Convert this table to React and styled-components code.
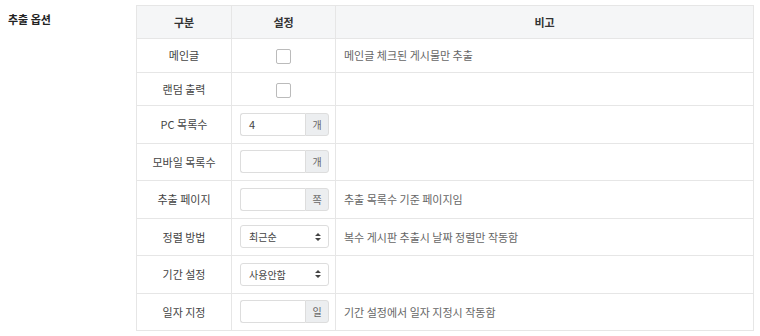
import React from 'react';
import styled, { createGlobalStyle } from 'styled-components';

const GlobalStyle = createGlobalStyle`
  body {
    margin: 0;
    background: #fff;
    font-family: "Noto Sans CJK KR", "Noto Sans", sans-serif;
    font-size: 11px;
    color: #555;
  }
`;

const Section = styled.div`
  display: flex;
  align-items: flex-start;
  padding: 5px 6px 5px 8px;
`;

const SectionTitle = styled.div`
  width: 128px;
  flex-shrink: 0;
  padding-top: 6px;
  font-weight: 700;
  font-size: 11px;
  color: #222;
`;

const Table = styled.table`
  width: 618px;
  border-collapse: collapse;
  border: 1px solid #e3e3e3;
  table-layout: fixed;
`;

const Th = styled.th`
  height: 32px;
  padding: 0 8px;
  background: #f5f6f7;
  border: 1px solid #e6e6e6;
  font-weight: 700;
  color: #333;
  text-align: center;
`;

const Td = styled.td`
  height: ${(p) => (p.$tall ? 36.5 : 32.5)}px;
  padding: 0 8px;
  border: 1px solid #e6e6e6;
  text-align: ${(p) => p.$align || 'left'};
  color: ${(p) => (p.$muted ? '#666' : '#444')};
  vertical-align: middle;
`;

const Check = styled.span`
  display: inline-block;
  width: 13px;
  height: 13px;
  border: 1px solid #bbb;
  border-radius: 2px;
  background: #fff;
  vertical-align: middle;
`;

const Group = styled.div`
  display: flex;
  width: 89px;
  height: 23px;
`;

const Field = styled.div`
  flex: 1;
  border: 1px solid #ddd;
  border-right: none;
  border-radius: 3px 0 0 3px;
  padding: 0 8px;
  display: flex;
  align-items: center;
  color: #444;
`;

const Addon = styled.div`
  width: 22px;
  border: 1px solid #ddd;
  border-radius: 0 3px 3px 0;
  background: #eceef0;
  display: flex;
  align-items: center;
  justify-content: center;
  color: #666;
  font-size: 10px;
`;

const Select = styled.div`
  width: 89px;
  height: 23px;
  box-sizing: border-box;
  border: 1px solid #ddd;
  border-radius: 3px;
  padding: 0 7px 0 8px;
  display: flex;
  align-items: center;
  justify-content: space-between;
  color: #444;
  font-size: 10px;
`;

const Arrows = () => (
  <svg width="6" height="8" viewBox="0 0 6 8">
    <path d="M3 0 L6 3 H0 Z M3 8 L0 5 H6 Z" fill="#444" />
  </svg>
);

const InputGroup = ({ value, unit }) => (
  <Group>
    <Field>{value}</Field>
    <Addon>{unit}</Addon>
  </Group>
);

const rows = [
  { name: '메인글', control: <Check />, note: '메인글 체크된 게시물만 추출', center: true },
  { name: '랜덤 출력', control: <Check />, note: '', center: true },
  { name: 'PC 목록수', control: <InputGroup value="4" unit="개" />, note: '' },
  { name: '모바일 목록수', control: <InputGroup value="" unit="개" />, note: '' },
  { name: '추출 페이지', control: <InputGroup value="" unit="쪽" />, note: '추출 목록수 기준 페이지임' },
  { name: '정렬 방법', control: <Select>최근순<Arrows /></Select>, note: '복수 게시판 추출시 날짜 정렬만 작동함' },
  { name: '기간 설정', control: <Select>사용안함<Arrows /></Select>, note: '' },
  { name: '일자 지정', control: <InputGroup value="" unit="일" />, note: '기간 설정에서 일자 지정시 작동함' },
];

export default function App() {
  return (
    <>
      <GlobalStyle />
      <Section>
        <SectionTitle>추출 옵션</SectionTitle>
        <Table>
          <colgroup>
            <col style={{ width: 95 }} />
            <col style={{ width: 104 }} />
            <col />
          </colgroup>
          <thead>
            <tr>
              <Th>구분</Th>
              <Th>설정</Th>
              <Th>비고</Th>
            </tr>
          </thead>
          <tbody>
            {rows.map((r) => (
              <tr key={r.name}>
                <Td $align="center" $tall={!r.center}>{r.name}</Td>
                <Td $align={r.center ? 'center' : 'left'} $tall={!r.center}>{r.control}</Td>
                <Td $muted $tall={!r.center}>{r.note}</Td>
              </tr>
            ))}
          </tbody>
        </Table>
      </Section>
    </>
  );
}
